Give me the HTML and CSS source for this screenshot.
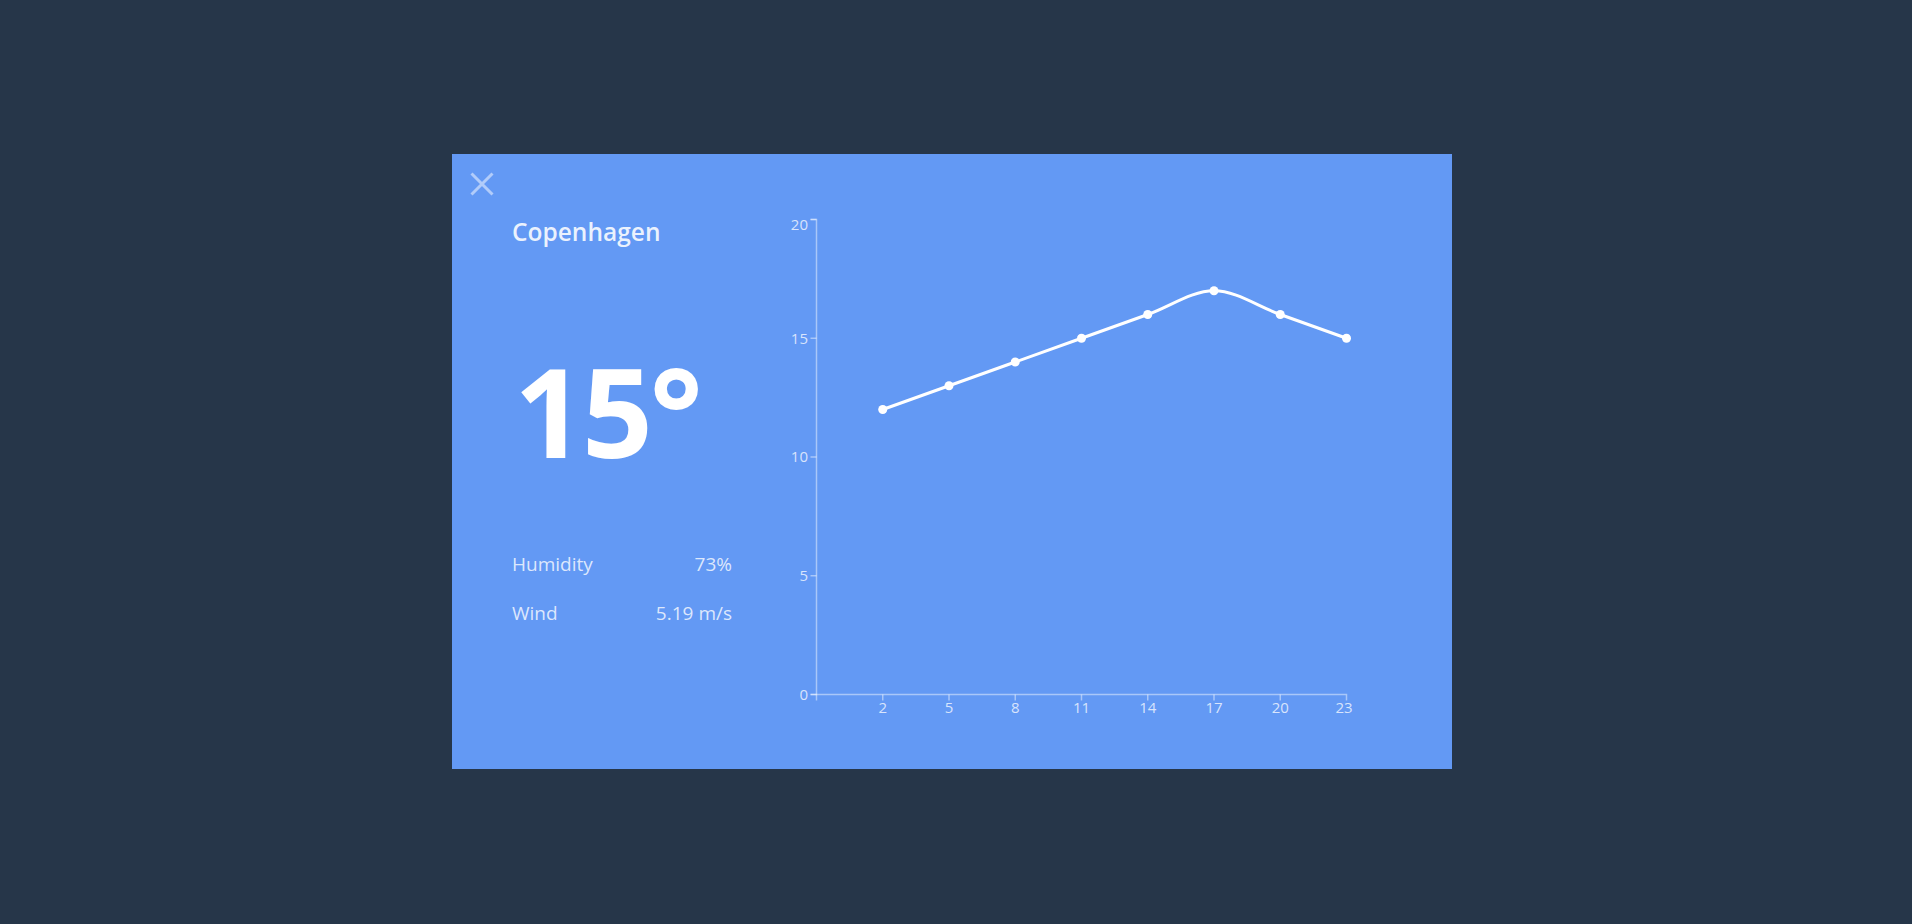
FILE: index.html
```html
<!DOCTYPE html>
<html lang="en">
<head>
<meta charset="utf-8">
<title>Weather - Copenhagen</title>
<link rel="stylesheet" href="styles.css">
</head>
<body>
<div class="stage">
  <section class="card">
    <button class="close" aria-label="Close">
      <svg width="24" height="24" viewBox="0 0 24 24"><path d="M1.5 1.5 L22.5 22.5 M22.5 1.5 L1.5 22.5" stroke="currentColor" stroke-width="3" fill="none"/></svg>
    </button>
    <div class="info">
      <h1 class="city">Copenhagen</h1>
      <div class="temp">15°</div>
      <dl class="stats">
        <div class="row"><dt>Humidity</dt><dd>73%</dd></div>
        <div class="row"><dt>Wind</dt><dd>5.19 m/s</dd></div>
      </dl>
    </div>
    <svg class="chart" width="600" height="540" viewBox="772 200 600 540">
      <g class="axis">
        <path class="domain" d="M810.5,219.5H816.5V694.5H810.5"/>
        <line x1="810.5" x2="816.5" y1="694.5" y2="694.5"/>
        <line x1="810.5" x2="816.5" y1="575.75" y2="575.75"/>
        <line x1="810.5" x2="816.5" y1="457" y2="457"/>
        <line x1="810.5" x2="816.5" y1="338.25" y2="338.25"/>
        <line x1="810.5" x2="816.5" y1="219.5" y2="219.5"/>
        <text x="808" y="694.5" dy="0.36em" text-anchor="end">0</text>
        <text x="808" y="575.75" dy="0.36em" text-anchor="end">5</text>
        <text x="808" y="457" dy="0.36em" text-anchor="end">10</text>
        <text x="808" y="338.25" dy="0.36em" text-anchor="end">15</text>
        <text x="808" y="230" text-anchor="end">20</text>
      </g>
      <g class="axis">
        <path class="domain" d="M816.5,700.5V694.5H1346.5V700.5"/>
        <line x1="882.75" x2="882.75" y1="694.5" y2="700.5"/>
        <line x1="949" x2="949" y1="694.5" y2="700.5"/>
        <line x1="1015.25" x2="1015.25" y1="694.5" y2="700.5"/>
        <line x1="1081.5" x2="1081.5" y1="694.5" y2="700.5"/>
        <line x1="1147.75" x2="1147.75" y1="694.5" y2="700.5"/>
        <line x1="1214" x2="1214" y1="694.5" y2="700.5"/>
        <line x1="1280.25" x2="1280.25" y1="694.5" y2="700.5"/>
        <text x="882.75" y="713" text-anchor="middle">2</text>
        <text x="949" y="713" text-anchor="middle">5</text>
        <text x="1015.25" y="713" text-anchor="middle">8</text>
        <text x="1081.5" y="713" text-anchor="middle">11</text>
        <text x="1147.75" y="713" text-anchor="middle">14</text>
        <text x="1214" y="713" text-anchor="middle">17</text>
        <text x="1280.25" y="713" text-anchor="middle">20</text>
        <text x="1344" y="713" text-anchor="middle">23</text>
      </g>
      <path class="line" d="M882.75,409.5L949,385.75L1015.25,362L1081.5,338.25L1147.75,314.5C1169.83,306.58,1191.92,290.75,1214,290.75C1236.08,290.75,1258.17,306.58,1280.25,314.5L1346.5,338.25"/>
      <g class="dots">
        <circle cx="882.75" cy="409.5" r="4.5"/>
        <circle cx="949" cy="385.75" r="4.5"/>
        <circle cx="1015.25" cy="362" r="4.5"/>
        <circle cx="1081.5" cy="338.25" r="4.5"/>
        <circle cx="1147.75" cy="314.5" r="4.5"/>
        <circle cx="1214" cy="290.75" r="4.5"/>
        <circle cx="1280.25" cy="314.5" r="4.5"/>
        <circle cx="1346.5" cy="338.25" r="4.5"/>
      </g>
    </svg>
  </section>
</div>
</body>
</html>
```

FILE: styles.css
```css
* { box-sizing: border-box; }
html, body { margin: 0; padding: 0; }
body {
  background: #263649;
  font-family: "Open Sans", "Noto Sans", "Liberation Sans", sans-serif;
  width: 1912px;
  height: 924px;
  overflow: hidden;
}
.stage {
  padding: 154px 0 0 452px;
}
.card {
  position: relative;
  width: 1000px;
  height: 615px;
  background: #6399f4;
  display: flex;
  align-items: flex-start;
}
.close {
  position: absolute;
  top: 18px;
  left: 18px;
  width: 24px;
  height: 24px;
  padding: 0;
  border: 0;
  background: none;
  color: rgba(255, 255, 255, 0.5);
  display: block;
}
.close svg { display: block; }
.info {
  margin-left: 60px;
  padding-top: 62px;
  width: 220px;
  display: flex;
  flex-direction: column;
}
.city {
  margin: 0;
  font-size: 24.5px;
  line-height: 32px;
  font-weight: 600;
  color: rgba(255, 255, 255, 0.88);
}
.temp {
  margin-top: 99px;
  margin-left: 2px;
  font-size: 124px;
  line-height: 126px;
  font-weight: 700;
  color: #ffffff;
  letter-spacing: -3px;
}
.stats {
  margin: 76px 0 0;
  display: flex;
  flex-direction: column;
  gap: 19px;
}
.row {
  display: flex;
  justify-content: space-between;
  font-size: 19px;
  line-height: 30px;
  color: rgba(255, 255, 255, 0.78);
}
.row dt, .row dd { margin: 0; }
.chart {
  display: block;
  margin-top: 46px;
  margin-left: 40px;
}
.axis path, .axis line {
  fill: none;
  stroke: rgba(255, 255, 255, 0.45);
  stroke-width: 1.5;
}
.axis text {
  fill: rgba(255, 255, 255, 0.75);
  font-size: 15px;
  font-family: "Open Sans", "Noto Sans", sans-serif;
}
.line {
  fill: none;
  stroke: #ffffff;
  stroke-width: 3;
}
.dots circle { fill: #ffffff; }
```
